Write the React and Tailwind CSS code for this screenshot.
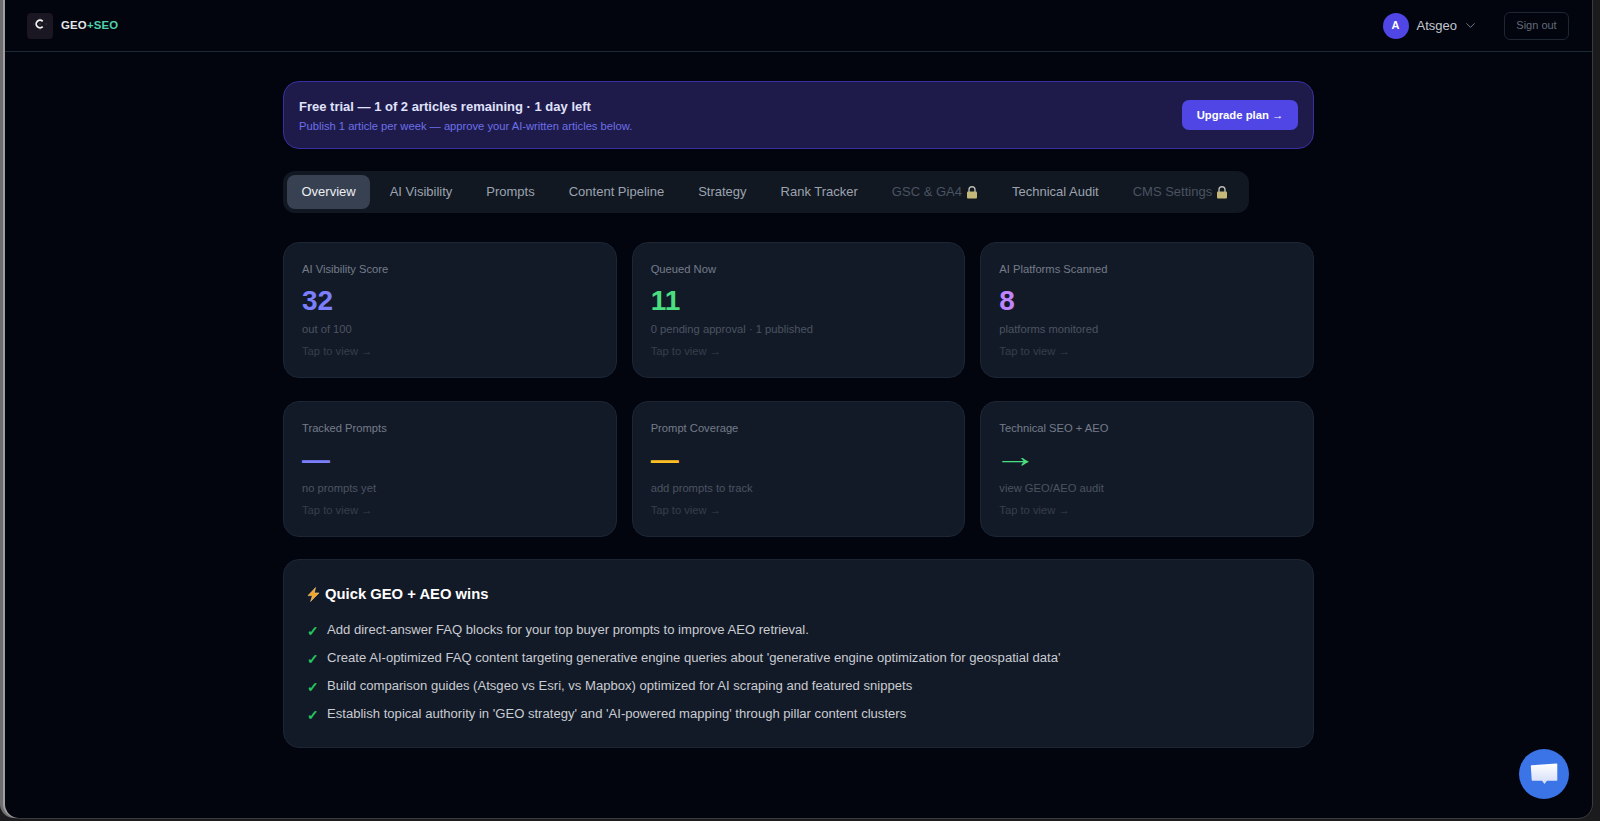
import React from "react";
import { ChevronDown } from "lucide-react";

const tabs = [
  { label: "Overview", active: true },
  { label: "AI Visibility" },
  { label: "Prompts" },
  { label: "Content Pipeline" },
  { label: "Strategy" },
  { label: "Rank Tracker" },
  { label: "GSC & GA4", locked: true },
  { label: "Technical Audit" },
  { label: "CMS Settings", locked: true },
];

const stats = [
  { title: "AI Visibility Score", value: "32", color: "text-[#7c7ffb] font-bold text-[28px] leading-[36px]", sub: "out of 100" },
  { title: "Queued Now", value: "11", color: "text-[#4ade80] font-bold text-[28px] leading-[36px]", sub: "0 pending approval · 1 published" },
  { title: "AI Platforms Scanned", value: "8", color: "text-[#c084fc] font-bold text-[28px] leading-[36px]", sub: "platforms monitored" },
  { title: "Tracked Prompts", value: "—", color: "text-[#7c7ffb] font-bold text-[28px] leading-[36px]", sub: "no prompts yet" },
  { title: "Prompt Coverage", value: "—", color: "text-[#fbbf24] font-bold text-[28px] leading-[36px]", sub: "add prompts to track" },
  { title: "Technical SEO + AEO", value: "→", color: "text-[#4ade80] font-normal text-[32px] leading-[29px] -ml-[6px] origin-left scale-x-[1.38]", sub: "view GEO/AEO audit" },
];

const wins = [
  "Add direct-answer FAQ blocks for your top buyer prompts to improve AEO retrieval.",
  "Create AI-optimized FAQ content targeting generative engine queries about 'generative engine optimization for geospatial data'",
  "Build comparison guides (Atsgeo vs Esri, vs Mapbox) optimized for AI scraping and featured snippets",
  "Establish topical authority in 'GEO strategy' and 'AI-powered mapping' through pillar content clusters",
];

const Lock = () => (
  <svg width="12" height="13" viewBox="0 0 11 13" className="ml-[4px] shrink-0">
    <path d="M2.5 6V3.8a3 3 0 0 1 6 0V6" fill="none" stroke="#b9b9b0" strokeWidth="1.4" />
    <rect x="0.5" y="5.5" width="10" height="7" rx="1" fill="#c4b777" />
  </svg>
);

const Logo = () => (
  <div className="flex h-[26px] w-[26px] items-start justify-center rounded-[4px] bg-[#1a1622] pt-[4px]">
    <svg width="16" height="16" viewBox="0 0 16 16">
      <path d="M8 0.5V1.8M8 12.2V13.5M1 7H2.3M13.7 7H15" stroke="#33424d" strokeWidth="1" />
      <circle cx="8" cy="7" r="0.7" fill="#2f6f6a" />
      <path d="M10.7 4.3a3.8 3.8 0 1 0 0 5.4" fill="none" stroke="#f5f5f5" strokeWidth="1.8" />
    </svg>
  </div>
);

const Bolt = () => (
  <svg width="13" height="15" viewBox="0 0 13 15" className="mr-[5px] shrink-0">
    <path d="M8.6 0.5 1 8.6h4.4L3.6 14.5l8.4-8.6H7.3Z" fill="#f5a524" stroke="#fde3a7" strokeWidth="0.5" />
  </svg>
);

const ChatBubble = () => (
  <svg width="28" height="24" viewBox="0 0 28 24">
    <defs>
      <linearGradient id="bubble" x1="0" y1="0" x2="0" y2="1">
        <stop offset="0" stopColor="#ffffff" />
        <stop offset="1" stopColor="#d3dcf8" />
      </linearGradient>
    </defs>
    <path d="M1.5 3.2 26.5 1.5a.8.8 0 0 1 .8.8V18a.8.8 0 0 1-.8.8H17L14.5 22 12 18.8H2.5a.8.8 0 0 1-.8-.7L.8 4a.8.8 0 0 1 .7-.8Z" fill="url(#bubble)" />
  </svg>
);

const StatCard = ({ title, value, color, sub }) => (
  <div className="flex h-[136px] flex-col rounded-[16px] border border-[#1c2635] bg-[#131a27] px-[18px] pt-[18px]">
    <p className="text-[11.2px] leading-[16px] text-[#747c8a]">{title}</p>
    <p className={`mt-[6px] h-[36px] ${color}`}>{value}</p>
    <p className="mt-[2px] text-[11.2px] leading-[16px] text-[#4b5361]">{sub}</p>
    <p className="mt-[6px] text-[11.2px] leading-[16px] text-[#363e4b]">Tap to view →</p>
  </div>
);

export default function App() {
  return (
    <div className="h-[821px] overflow-hidden bg-[#1b1b1d] pb-[3px] pl-[5px] pr-[8px] font-['Liberation_Sans',sans-serif]">
      <div className="relative flex h-full flex-col overflow-hidden rounded-b-[14px] bg-[#02040e] shadow-[-2px_0_0_#a0a0a3,-5px_0_0_#6e6e70,1px_0_0_#3a3a3c,0_1px_0_#3a3a3c]">
        <header className="flex h-[52px] shrink-0 items-center justify-between border-b border-[#1c2a35] px-[22px]">
          <div className="flex items-center gap-[8px]">
            <Logo />
            <span className="text-[11.4px] font-bold tracking-[0.2px] text-[#e5e7eb]">
              GEO<span className="text-[#4fd1ab]">+SEO</span>
            </span>
          </div>
          <div className="mr-[1px] flex items-center">
            <div className="flex h-[26px] w-[26px] items-center justify-center rounded-full bg-[#4f46e5] text-[11px] font-bold text-white">
              A
            </div>
            <span className="ml-[8px] text-[13px] text-[#c3c7ce]">Atsgeo</span>
            <ChevronDown className="ml-[6px] h-[15px] w-[15px] text-[#7b8390]" strokeWidth={1.5} />
            <button className="ml-[26px] h-[28px] w-[65px] rounded-[6px] border border-[#1f2733] text-[11px] text-[#636b78]">
              Sign out
            </button>
          </div>
        </header>

        <main className="mx-auto flex w-[1031px] flex-col pt-[29px]">
          <div className="flex h-[68px] items-center justify-between rounded-[16px] border border-[#3730a3] bg-[#1e1b4b] px-[15px]">
            <div className="pt-[2px]">
              <p className="text-[13px] font-bold leading-[18px] text-[#e0e2fb]">
                Free trial — 1 of 2 articles remaining · 1 day left
              </p>
              <p className="mt-[2px] text-[11.2px] leading-[16px] text-[#6d6fe8]">
                Publish 1 article per week — approve your AI-written articles below.
              </p>
            </div>
            <button className="h-[30px] w-[116px] rounded-[7px] bg-[#4f46e5] text-[11.3px] font-bold text-white">
              Upgrade plan →
            </button>
          </div>

          <nav className="mt-[22px] flex h-[42px] w-[966px] items-center rounded-[12px] bg-[#111822] px-[4px] text-[13px]">
            {tabs.map((tab) => (
              <span
                key={tab.label}
                className={`mr-[5px] flex h-[34px] items-center whitespace-nowrap rounded-[8px] px-[14.5px] ${
                  tab.active
                    ? "bg-[#374151] text-[#eceef1]"
                    : tab.locked
                      ? "text-[#4b5361]"
                      : "text-[#9ca3af]"
                }`}
              >
                {tab.label}
                {tab.locked && <Lock />}
              </span>
            ))}
          </nav>

          <div className="mt-[29px] grid grid-cols-3 gap-x-[15px] gap-y-[23px]">
            {stats.map((stat) => (
              <StatCard key={stat.title} {...stat} />
            ))}
          </div>

          <section className="mt-[22px] h-[189px] rounded-[16px] border border-[#1c2635] bg-[#131a27] px-[23px] pt-[24px]">
            <h2 className="flex items-center text-[14.8px] font-bold leading-[20px] text-white">
              <Bolt />
              Quick GEO + AEO wins
            </h2>
            <ul className="mt-[16px] flex flex-col gap-[9px]">
              {wins.map((win) => (
                <li key={win} className="flex h-[19px] text-[13.08px] leading-[19px] text-[#c9ccd2]">
                  <span className="mr-[10px] mt-[2px] w-[10px] text-[14px] font-bold text-[#22c55e]">✓</span>
                  {win}
                </li>
              ))}
            </ul>
          </section>
        </main>

        <button className="absolute bottom-[19px] right-[23px] flex h-[50px] w-[50px] items-center justify-center rounded-full bg-[#3b74e6]">
          <ChatBubble />
        </button>
      </div>
    </div>
  );
}
